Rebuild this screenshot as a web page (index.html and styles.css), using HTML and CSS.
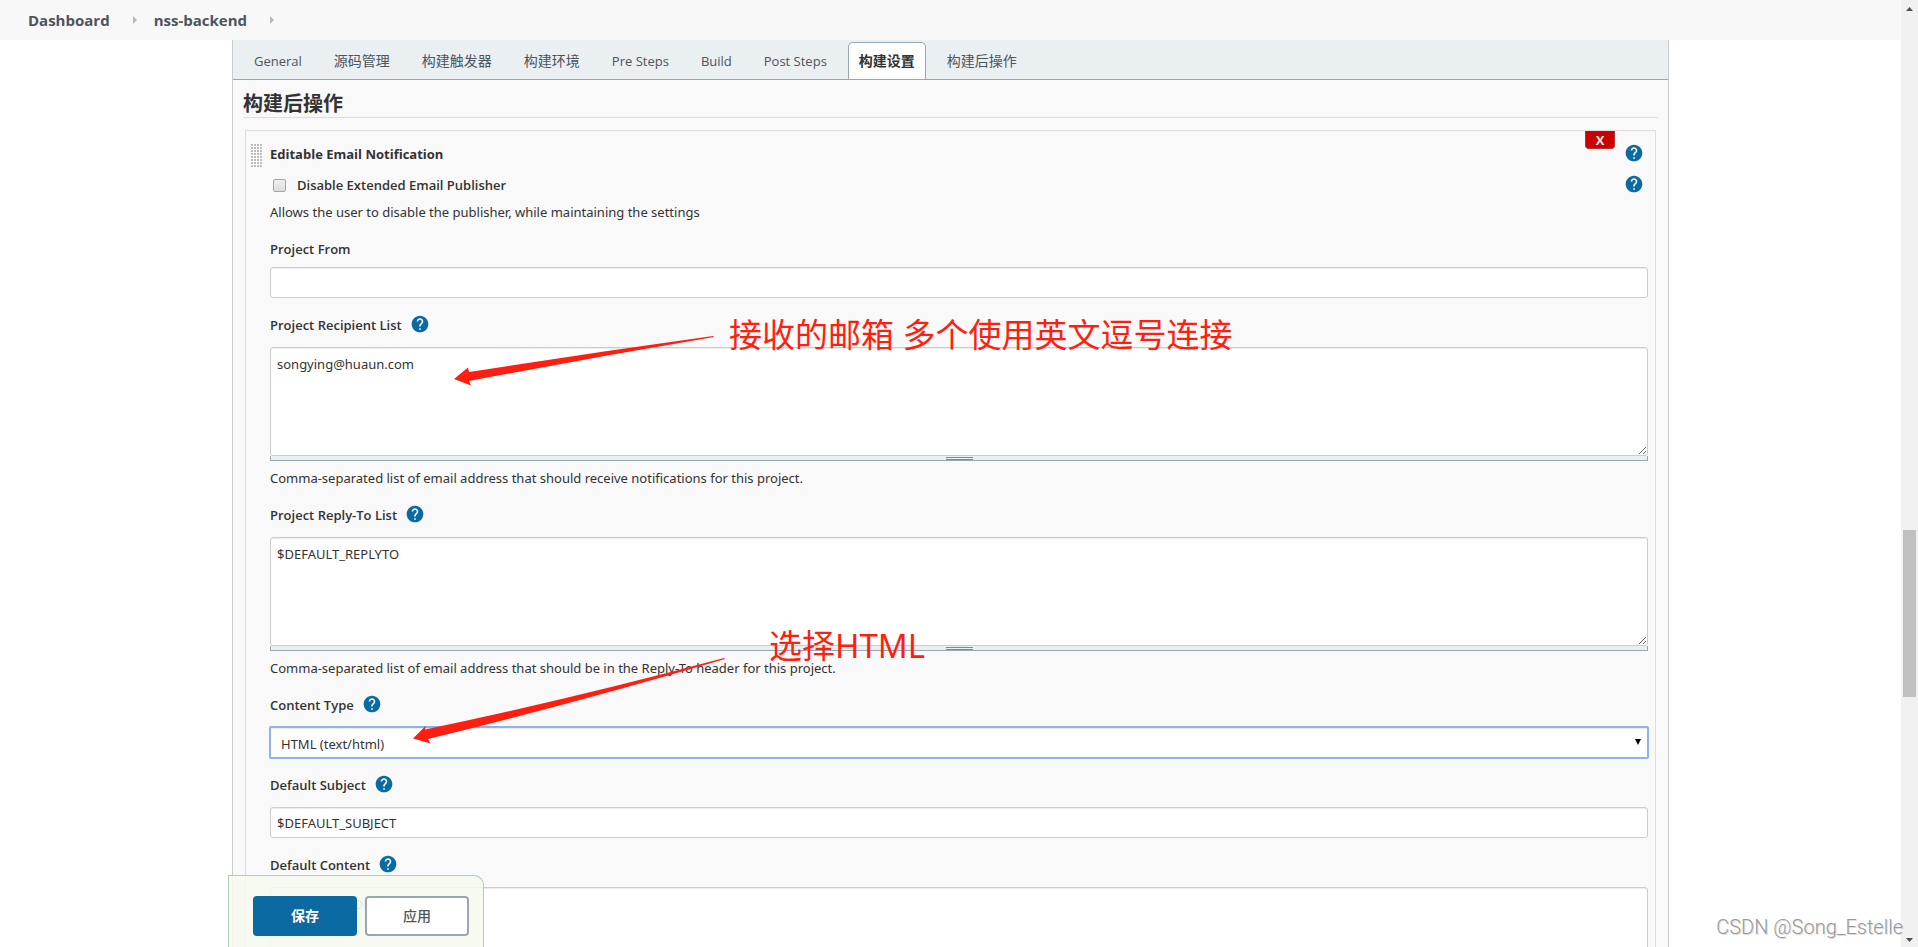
FILE: index.html
```html
<!DOCTYPE html>
<html lang="zh-CN">
<head>
<meta charset="utf-8">
<title>nss-backend Config</title>
<link rel="stylesheet" href="styles.css">
</head>
<body>
<svg class="defs" aria-hidden="true">
  <symbol id="help" viewBox="0 0 24 24"><path d="M12 2C6.48 2 2 6.48 2 12s4.480 10 10 10 10-4.480 10-10S17.520 2 12 2zm1 17h-2v-2h2v2zm2.070-7.750l-.9.920C13.450 12.900 13 13.500 13 15h-2v-.5c0-1.100.45-2.100 1.170-2.830l1.240-1.260c.37-.36.59-.86.59-1.410 0-1.100-.9-2-2-2s-2 .9-2 2H8c0-2.210 1.790-4 4-4s4 1.790 4 4c0 .88-.36 1.680-.93 2.250z"/></symbol>
  <symbol id="crumb" viewBox="0 0 4 8"><path d="M0 0l4 4-4 4z"/></symbol>
</svg>
<div class="app">
  <div class="page">
    <nav class="breadcrumbs">
      <a href="#">Dashboard</a>
      <svg class="crumb"><use href="#crumb"/></svg>
      <a href="#">nss-backend</a>
      <svg class="crumb"><use href="#crumb"/></svg>
    </nav>
    <main class="panel">
      <nav class="tabs">
        <a href="#">General</a>
        <a href="#" class="cjk">源码管理</a>
        <a href="#" class="cjk">构建触发器</a>
        <a href="#" class="cjk">构建环境</a>
        <a href="#">Pre Steps</a>
        <a href="#">Build</a>
        <a href="#">Post Steps</a>
        <a href="#" class="cjk active">构建设置</a>
        <a href="#" class="cjk">构建后操作</a>
      </nav>
      <h1 class="section-title">构建后操作</h1>
      <form class="block">
        <span class="drag"></span>
        <button class="remove" type="button">X</button>
        <div class="row title-row">
          <b>Editable Email Notification</b>
          <button class="help" type="button" aria-label="Help"><svg><use href="#help"/></svg></button>
        </div>
        <div class="row check-row">
          <label><input type="checkbox">Disable Extended Email Publisher</label>
          <button class="help" type="button" aria-label="Help"><svg><use href="#help"/></svg></button>
        </div>
        <p class="note">Allows the user to disable the publisher, while maintaining the settings</p>

        <div class="label"><label for="from">Project From</label></div>
        <input class="text" id="from" type="text">

        <div class="label with-help"><label for="recipients">Project Recipient List</label><button class="help" type="button" aria-label="Help"><svg><use href="#help"/></svg></button></div>
        <textarea class="area" id="recipients">songying@huaun.com</textarea>
        <div class="resizer"><i></i></div>
        <p class="note">Comma-separated list of email address that should receive notifications for this project.</p>

        <div class="label with-help"><label for="replyto">Project Reply-To List</label><button class="help" type="button" aria-label="Help"><svg><use href="#help"/></svg></button></div>
        <textarea class="area" id="replyto">$DEFAULT_REPLYTO</textarea>
        <div class="resizer"><i></i></div>
        <p class="note">Comma-separated list of email address that should be in the Reply-To header for this project.</p>

        <div class="label with-help"><label for="ctype">Content Type</label><button class="help" type="button" aria-label="Help"><svg><use href="#help"/></svg></button></div>
        <div class="select">
          <select id="ctype"><option>HTML (text/html)</option></select>
          <svg viewBox="0 0 6 6"><path d="M0 0h6L3 6z"/></svg>
        </div>

        <div class="label with-help"><label for="subject">Default Subject</label><button class="help" type="button" aria-label="Help"><svg><use href="#help"/></svg></button></div>
        <input class="text" id="subject" type="text" value="$DEFAULT_SUBJECT">

        <div class="label with-help"><label for="content">Default Content</label><button class="help" type="button" aria-label="Help"><svg><use href="#help"/></svg></button></div>
        <textarea class="area" id="content">$DEFAULT_CONTENT</textarea>
      </form>
    </main>
    <div class="save-bar">
      <button class="save" type="button">保存</button>
      <button class="apply" type="button">应用</button>
    </div>
  </div>
  <div class="scrollbar">
    <svg viewBox="0 0 7 4"><path d="M0 4h7L3.500 0z"/></svg>
    <span class="thumb"></span>
    <svg viewBox="0 0 7 4"><path d="M0 0h7L3.500 4z"/></svg>
  </div>
  <svg class="arrows"><path d="M454 379L468 367.500 469 372Q590 353 713 336L714 337Q590 358 469 381L471 385.500zM413 738.500L426 725.500 425 729.500Q575 698 724 658L725 659Q576 703 428 739L430.500 743.500z"/></svg>
  <span class="remark remark-recipients">接收的邮箱 多个使用英文逗号连接</span>
  <span class="remark remark-type">选择HTML</span>
  <span class="watermark">CSDN @Song_Estelle</span>
</div>
</body>
</html>
```
FILE: styles.css
```css
* { box-sizing: border-box; }
body { margin: 0; background: #fff; color: #333; font: 13px/20px "Open Sans", "Noto Sans", "Noto Sans CJK SC", sans-serif; }
button, input, textarea, select { font: inherit; color: inherit; margin: 0; }
a { color: #4d545d; text-decoration: none; }
p, h1 { margin: 0; }
.defs { position: absolute; width: 0; height: 0; }

.app { position: relative; display: flex; height: 100vh; overflow: hidden; }
.page { position: relative; flex: 1; min-width: 0; overflow: hidden; }

.breadcrumbs { display: flex; align-items: center; height: 40px; padding-left: 28px; background: #f8f8f8; font-size: 15px; font-weight: 700; }
.crumb { width: 4px; height: 8px; margin: 0 17px 0 23px; fill: #b8b8b8; }

.panel { margin: 0 232px; border: solid #ccc; border-width: 0 1px; background: #f9f9f9; }
.tabs { display: flex; align-items: flex-end; height: 40px; padding-left: 10px; background: #eaeff2; border-bottom: 1px solid #98a7b1; }
.tabs a { height: 37px; margin-right: 10px; padding: 9px 11px 0; }
.tabs a, .save-bar button, .section-title { font-family: "Open Sans", "Noto Sans CJK SC", sans-serif; }
.tabs .cjk { font-size: 14px; }
.tabs .active { border: 1px solid #98a7b1; border-bottom: 0; border-radius: 5px 5px 0 0; padding: 8px 10px 0; background: #fff; color: #333; font-weight: 700; }

.section-title { margin: 0 10px 12px; height: 38px; padding-top: 10px; border-bottom: 1px solid #ddd; font-size: 20px; line-height: 28px; }

.block { position: relative; margin: 0 12px; padding: 13px 7px 0 24px; border: 1px solid #ddd; }
.drag { position: absolute; left: 5px; top: 13px; width: 12px; height: 24px; background: radial-gradient(circle at 1px 1px, #bbb 1px, #fff 1px) 0 0 / 3px 3px; }
.remove { position: absolute; top: 0; right: 40px; width: 30px; height: 18px; padding: 0; border: 1px solid #b33; border-top: 0; border-radius: 0 0 4px 4px; background: #c00; color: #eee; font-weight: 700; line-height: 18px; }
.row { display: flex; align-items: center; justify-content: space-between; padding-right: 4px; }
.title-row { height: 20px; }
.check-row { height: 42px; }
.check-row label { display: flex; align-items: center; font-weight: 600; }
.check-row input { appearance: none; width: 13px; height: 13px; margin: 0 11px 0 3px; border: 1px solid #a6a6a6; border-radius: 2px; background: linear-gradient(#eee, #ddd); }
.help { display: flex; margin-bottom: 2px; padding: 0; border: 0; background: none; }
.help svg { width: 20px; height: 20px; fill: #0b6aa2; }
.note { margin-bottom: 17px; }
.note, .text, .area, .select select { font-family: "Noto Sans", sans-serif; }
.check-row + .note { margin-top: -4px; }
.label { display: flex; align-items: center; gap: 8px; height: 20px; margin: 17px 0 8px; font-weight: 600; }
.with-help { margin-bottom: 12px; }
.text, .area, .select select { display: block; width: 100%; border: 1px solid #ccc; border-radius: 3px; background: #fff; box-shadow: inset 0 1px 1px rgba(0, 0, 0, .08); outline: 0; }
.text { height: 31px; padding: 4px 6px; }
.area { height: 109px; padding: 6px; resize: vertical; }
.resizer { display: flex; justify-content: center; height: 5px; background: #eaeff2; border: solid #98a7b1; border-width: 0 1px 1px; }
.resizer + .note { margin-top: 7px; }
.resizer i { width: 27px; height: 3px; margin-top: 1px; border: solid #888; border-width: 1px 0; }
.select { position: relative; margin: -1px; }
.select select { appearance: none; height: 33px; padding: 2px 10px 0; border: 2px solid #8eb2f0; border-radius: 2px; }
.select svg { position: absolute; right: 8px; top: 13px; width: 6px; height: 6px; }

.save-bar { position: absolute; left: 228px; bottom: 0; display: flex; gap: 8px; height: 72px; padding: 20px 14px 0 24px; border: 1px solid #a9cfbb; border-bottom: 0; border-radius: 0 10px 0 0; background: rgba(245, 249, 239, .9); }
.save-bar button { width: 104px; height: 40px; border: 2px solid #98a7b1; border-radius: 4px; background: #fff; color: #4d545d; font-size: 14px; font-weight: 500; }
.save-bar .save { border-color: #0b6aa2; background: #0b6aa2; color: #fff; font-weight: 700; }

.scrollbar { display: flex; flex-direction: column; align-items: center; width: 17px; padding: 7px 0 5px; background: #f1f1f1; }
.scrollbar svg { width: 7px; height: 4px; fill: #505050; }
.thumb { width: 13px; height: 167px; margin: 519px 0 auto; background: #c1c1c1; }

.arrows { position: absolute; inset: 0; width: 100%; height: 100%; fill: #ff1f10; pointer-events: none; }
.remark { position: absolute; color: #ff1f10; font: 33px/40px "Noto Sans", "Noto Sans CJK SC", sans-serif; white-space: nowrap; }
.remark-recipients { left: 729px; top: 315px; }
.remark-type { left: 769px; top: 626px; }
.watermark { position: absolute; right: 15px; bottom: 8px; color: #999; font: 300 20px/24px Roboto, sans-serif; text-shadow: 1px 1px 0 #ddd; }
```
